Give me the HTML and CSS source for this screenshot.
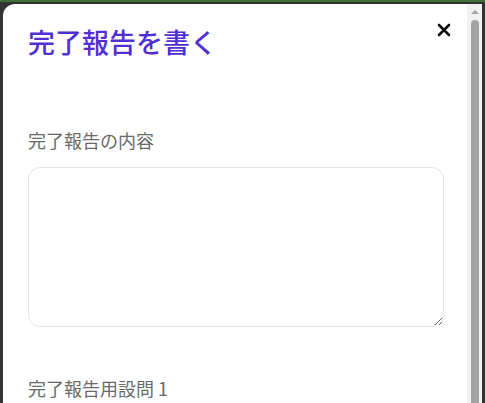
FILE: index.html
```html
<!DOCTYPE html>
<html lang="ja">
<head>
<meta charset="utf-8">
<title>完了報告を書く</title>
<link rel="stylesheet" href="styles.css">
</head>
<body>
<div class="topline"></div>
<div class="overlay">
  <div class="modal">
    <div class="content">
      <div class="header">
        <h2 class="title">完了報告を書く</h2>
        <button class="close" type="button" aria-label="閉じる">
          <svg width="14" height="14" viewBox="0 0 14 14"><path d="M2 2 L12 12 M12 2 L2 12" stroke="#111" stroke-width="2.6" stroke-linecap="round"/></svg>
        </button>
      </div>
      <label class="label first">完了報告の内容</label>
      <textarea class="textarea"></textarea>
      <label class="label second">完了報告用設問 1</label>
      <input class="input" type="text">
    </div>
    <div class="scrollbar">
      <div class="sb-btn"><div class="sb-arrow"></div></div>
      <div class="sb-thumb"></div>
    </div>
  </div>
</div>
</body>
</html>
```
FILE: styles.css
```css
html, body {
  margin: 0;
  padding: 0;
  height: 100%;
  overflow: hidden;
}
body {
  background: #333333;
  font-family: "Noto Sans CJK JP", "Noto Sans", sans-serif;
  display: flex;
  flex-direction: column;
}
.topline {
  height: 2px;
  background: #3e6f35;
  flex: none;
}
.overlay {
  flex: 1;
  padding: 2px 3px 0 3px;
  display: flex;
  min-height: 0;
}
.modal {
  flex: 1;
  background: #ffffff;
  border-radius: 12px 0 0 0;
  display: flex;
  min-height: 0;
  overflow: hidden;
}
.content {
  flex: 1;
  padding: 14px 23px 0 25px;
  display: flex;
  flex-direction: column;
}
.content > * {
  flex: none;
}
.header {
  display: flex;
  justify-content: space-between;
  align-items: flex-start;
}
.title {
  margin: 7px 0 0 0;
  font-size: 27px;
  line-height: 34px;
  font-weight: 500;
  color: #5030d4;
}
.close {
  width: 24px;
  height: 24px;
  margin-right: -12px;
  padding: 0;
  border: none;
  background: transparent;
  display: flex;
  align-items: center;
  justify-content: center;
}
.label {
  display: block;
  font-size: 18px;
  line-height: 26px;
  color: #6a6a6a;
}
.label.first {
  margin-top: 68px;
}
.textarea {
  display: block;
  margin-top: 14px;
  height: 160px;
  box-sizing: border-box;
  border: 1px solid #e6e6e6;
  border-radius: 12px;
  padding: 10px 12px;
  font: inherit;
  resize: vertical;
  outline: none;
}
.label.second {
  margin-top: 48px;
}
.input {
  margin-top: 13px;
  height: 44px;
  box-sizing: border-box;
  border: 1px solid #e6e6e6;
  border-radius: 12px;
}
.scrollbar {
  width: 15px;
  flex: none;
  background: #f1f1f1;
  display: flex;
  flex-direction: column;
  align-items: center;
}
.sb-btn {
  height: 16px;
  width: 100%;
  display: flex;
  align-items: center;
  justify-content: center;
}
.sb-arrow {
  width: 0;
  height: 0;
  margin-left: 1px;
  border-left: 4px solid transparent;
  border-right: 4px solid transparent;
  border-bottom: 4px solid #a3a3a3;
}
.sb-thumb {
  margin-top: 0;
  margin-left: 1px;
  width: 8px;
  flex: 1;
  background: #a3a3a3;
  border-radius: 4px 4px 0 0;
}
```
